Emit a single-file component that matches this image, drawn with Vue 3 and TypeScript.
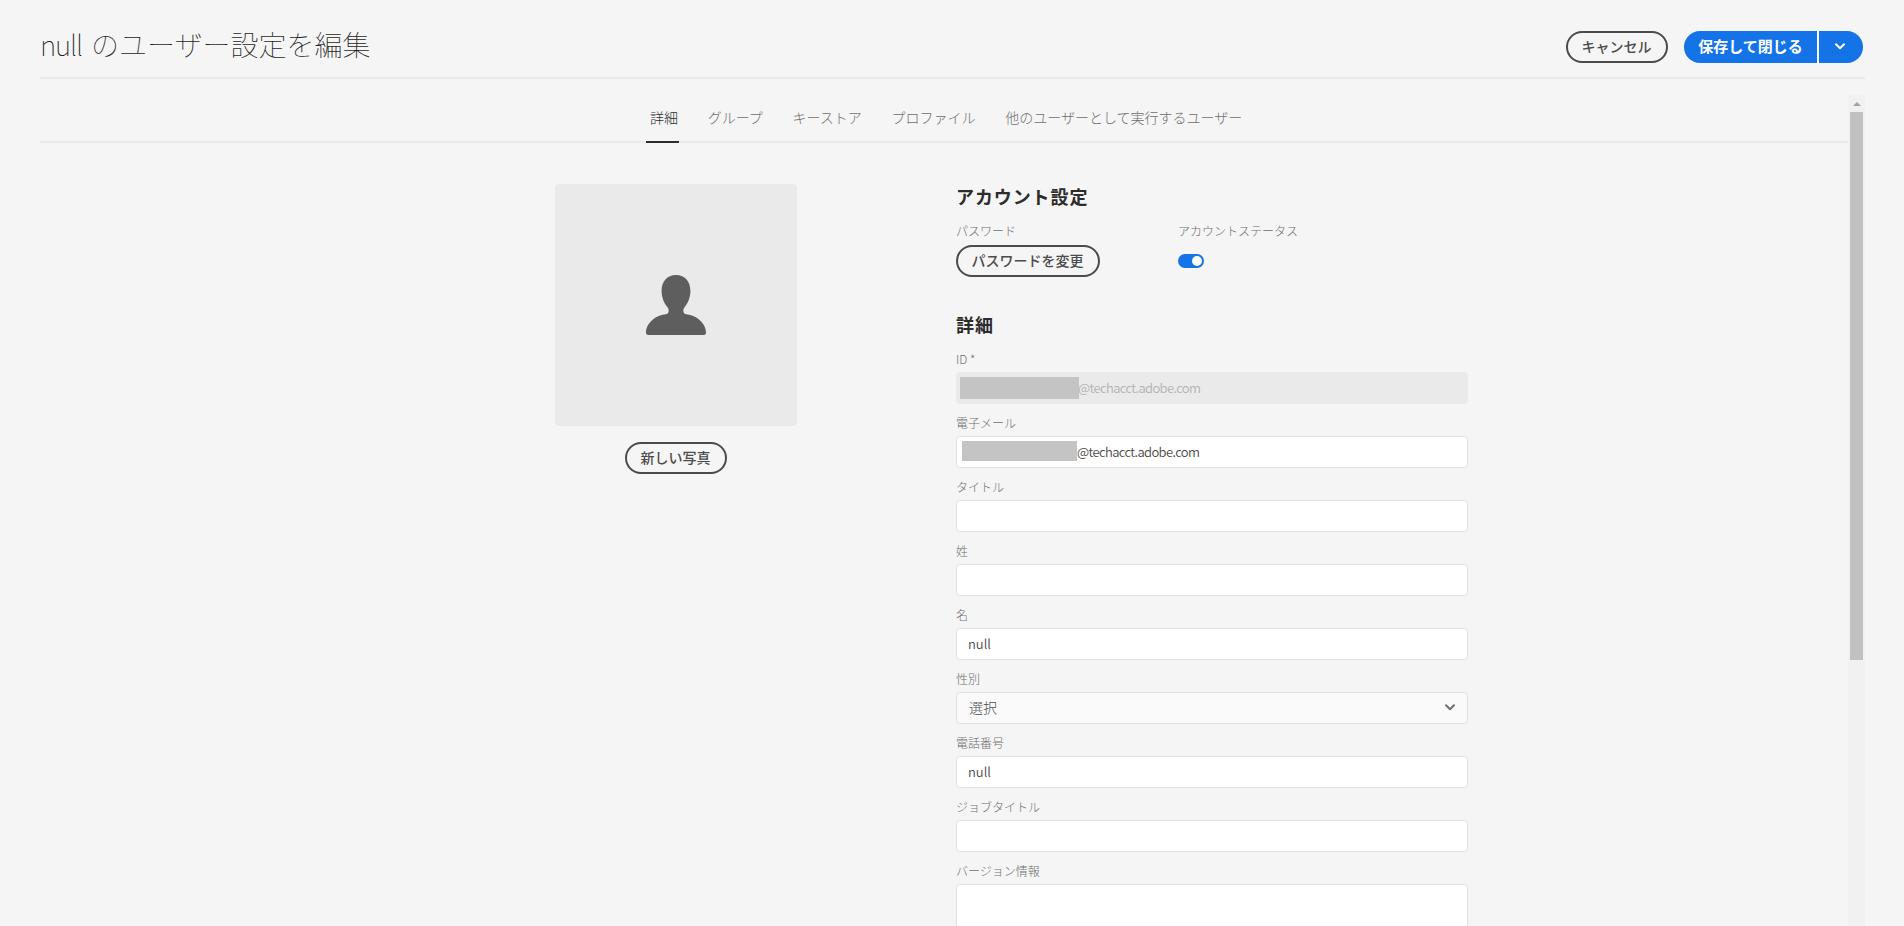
<script setup lang="ts">
interface Field {
  label: string
  value: string
  kind: 'disabled' | 'email' | 'text' | 'select' | 'area'
}

const tabs: string[] = ['詳細', 'グループ', 'キーストア', 'プロファイル', '他のユーザーとして実行するユーザー']

const fields: Field[] = [
  { label: 'ID *', value: '@techacct.adobe.com', kind: 'disabled' },
  { label: '電子メール', value: '@techacct.adobe.com', kind: 'email' },
  { label: 'タイトル', value: '', kind: 'text' },
  { label: '姓', value: '', kind: 'text' },
  { label: '名', value: 'null', kind: 'text' },
  { label: '性別', value: '選択', kind: 'select' },
  { label: '電話番号', value: 'null', kind: 'text' },
  { label: 'ジョブタイトル', value: '', kind: 'text' },
  { label: 'バージョン情報', value: '', kind: 'area' },
]
</script>

<template>
  <div class="page">
    <header class="header">
      <h1><span class="name">null</span> のユーザー設定を編集</h1>
      <div class="actions">
        <button class="btn">キャンセル</button>
        <div class="split">
          <button class="save">保存して閉じる</button>
          <button class="more">
            <svg width="10" height="7" viewBox="0 0 10 7"><path d="M1 1.2l4 4 4-4" /></svg>
          </button>
        </div>
      </div>
    </header>

    <div class="viewport">
      <div class="scroll-content">
        <nav class="tabs">
          <a v-for="(tab, i) in tabs" :key="tab" :class="{ active: i === 0 }">{{ tab }}</a>
        </nav>
        <main class="content">
          <section class="photo">
            <div class="avatar">
              <svg width="60" height="60" viewBox="0 0 60 60">
                <path d="M30 0C21 0 15.6 6.500 15.600 16C15.600 22.500 18 28 21.300 32Q22.800 33.700 22.700 35.500Q22.700 38.700 20 39.300C9 40 0 49 0 57.500Q0 60 2.500 60H57.500Q60 60 60 57.500C60 49 51 40 40 39.300Q37.300 38.700 37.300 35.500Q37.200 33.700 38.700 32C42 28 44.400 22.500 44.400 16C44.400 6.500 39 0 30 0Z" />
              </svg>
            </div>
            <button class="btn">新しい写真</button>
          </section>

          <section class="form">
            <h2>アカウント設定</h2>
            <div class="account">
              <div class="account-col">
                <label>パスワード</label>
                <button class="btn wide">パスワードを変更</button>
              </div>
              <div class="account-col">
                <label>アカウントステータス</label>
                <span class="toggle"><i></i></span>
              </div>
            </div>
            <h2 class="second">詳細</h2>
            <div v-for="f in fields" :key="f.label" class="field">
              <label>{{ f.label }}</label>
              <div class="input" :class="f.kind">
                <span v-if="f.kind === 'disabled' || f.kind === 'email'" class="mask"></span>
                <span class="value">{{ f.value }}</span>
                <svg v-if="f.kind === 'select'" width="10" height="7" viewBox="0 0 10 7"><path d="M1 1.200l4 4 4-4" /></svg>
              </div>
            </div>
          </section>
        </main>
      </div>
      <div class="scrollbar">
        <div class="arrow"></div>
        <div class="thumb"></div>
      </div>
    </div>
  </div>
</template>

<style>
body {
  background: #f5f5f5;
  overflow: hidden;
}
</style>

<style scoped>
* {
  box-sizing: border-box;
}
.page {
  display: flex;
  flex-direction: column;
  height: 926px;
  padding: 0 39px 0 40px;
  overflow: hidden;
  font-family: "Noto Sans CJK JP", "Noto Sans", sans-serif;
  color: #4b4b4b;
}
.header {
  display: flex;
  justify-content: space-between;
  flex: none;
  height: 79px;
  border-bottom: 2px solid #eaeaea;
}
h1 {
  margin: 24px 0 0;
  font-size: 28px;
  line-height: 40px;
  font-weight: 100;
  color: #1e1e1e;
  white-space: nowrap;
}
.name {
  margin-right: 3px;
  letter-spacing: -1.2px;
}
.actions {
  display: flex;
  align-items: flex-start;
  gap: 16px;
  padding: 31px 2px 0 0;
}
button {
  font-family: inherit;
  white-space: nowrap;
}
.btn {
  width: 102px;
  height: 32px;
  padding: 0 1px 2px 0;
  border: 2px solid #4b4b4b;
  border-radius: 16px;
  background: transparent;
  color: #4b4b4b;
  font-size: 14px;
  font-weight: 500;
  line-height: 25px;
}
.btn.wide {
  width: 144px;
}
.split {
  display: flex;
  gap: 2px;
  background: linear-gradient(#fff, #fff) 133px 0 / 2px 32px no-repeat;
}
.save,
.more {
  display: flex;
  align-items: center;
  justify-content: center;
  height: 32px;
  border: 0;
  background: #1473e6;
  color: #fff;
}
.save {
  width: 133px;
  padding: 0 0 4px;
  border-radius: 16px 0 0 16px;
  font-size: 15px;
  font-weight: 700;
}
.more {
  width: 44px;
  padding: 0 2px 2px 0;
  border-radius: 0 16px 16px 0;
}
svg path {
  fill: none;
  stroke: currentColor;
  stroke-width: 2;
  stroke-linecap: round;
  stroke-linejoin: round;
}
.viewport {
  display: flex;
  flex: 1;
  margin-top: 16px;
  min-height: 0;
}
.scroll-content {
  width: 1808px;
  overflow: hidden;
}
.tabs {
  display: flex;
  gap: 24.7px;
  height: 48px;
  padding-left: 606px;
  border-bottom: 2px solid #eaeaea;
}
.tabs a {
  height: 48px;
  padding: 0 1px 0 4px;
  border-bottom: 2px solid transparent;
  font-size: 14px;
  font-weight: 300;
  line-height: 44px;
  color: #6e6e6e;
  white-space: nowrap;
}
.tabs a.active {
  border-color: #2c2c2c;
  color: #2c2c2c;
}
.content {
  display: flex;
  gap: 159px;
  padding: 41px 0 0 515px;
}
.photo {
  display: flex;
  flex-direction: column;
  align-items: center;
  gap: 16px;
  width: 242px;
}
.avatar {
  display: flex;
  align-items: center;
  justify-content: center;
  width: 242px;
  height: 242px;
  border-radius: 4px;
  background: #eaeaea;
}
.avatar path {
  fill: #5e5e5e;
  stroke: none;
}
.form {
  width: 512px;
}
h2 {
  margin: 0;
  height: 37px;
  font-size: 18px;
  letter-spacing: 0.9px;
  line-height: 24px;
  font-weight: 700;
  color: #2c2c2c;
}
.second {
  margin-top: 34px;
  height: 36px;
}
label {
  display: block;
  height: 24px;
  font-size: 12px;
  line-height: 20px;
  font-weight: 300;
  color: #6e6e6e;
  white-space: nowrap;
}
.account {
  display: flex;
}
.account-col {
  width: 222px;
  height: 57px;
}
.account-col .btn,
.toggle {
  display: block;
}
.account-col .toggle {
  width: 26px;
  height: 14px;
  margin-top: 9px;
  padding: 2px;
  border-radius: 7px;
  background: #1473e6;
}
.toggle i {
  display: block;
  width: 10px;
  height: 10px;
  margin-left: 12px;
  border-radius: 50%;
  background: #fff;
}
.field {
  margin-bottom: 8px;
}
.field label {
  line-height: 22px;
}
.input {
  display: flex;
  align-items: center;
  height: 32px;
  padding: 0 11px 2px;
  border: 1px solid #e1e1e1;
  border-radius: 4px;
  background: #fff;
  font-size: 13px;
  font-weight: 350;
  white-space: nowrap;
}
.input.disabled {
  padding: 0 0 0 3px;
  border-color: #eaeaea;
  background: #eaeaea;
  color: #b3b3b3;
}
.input.email {
  padding: 0 0 0 5px;
}
.mask {
  width: 119px;
  height: 22px;
  background: #c4c4c4;
}
.email .mask {
  width: 115px;
  height: 20px;
  margin-top: -2px;
}
.disabled .value,
.email .value {
  padding-bottom: 2px;
  letter-spacing: -0.63px;
}
.disabled .value {
  margin-left: -1px;
}
.input.select {
  justify-content: space-between;
  padding: 0 12px 1px;
  background: #fafafa;
  color: #4b4b4b;
  font-size: 14px;
  font-weight: 300;
}
.select .value {
  padding-bottom: 1px;
}
.select path {
  stroke: #6e6e6e;
}
.input.area {
  height: 90px;
}
.scrollbar {
  display: flex;
  flex-direction: column;
  align-items: center;
  width: 17px;
  background: #f1f1f1;
}
.arrow {
  width: 0;
  height: 0;
  margin: 7px 0 6px;
  border: 4px solid transparent;
  border-top: 0;
  border-bottom: 4px solid #a3a3a3;
}
.thumb {
  width: 13px;
  height: 548px;
  background: #c1c1c1;
}
</style>
